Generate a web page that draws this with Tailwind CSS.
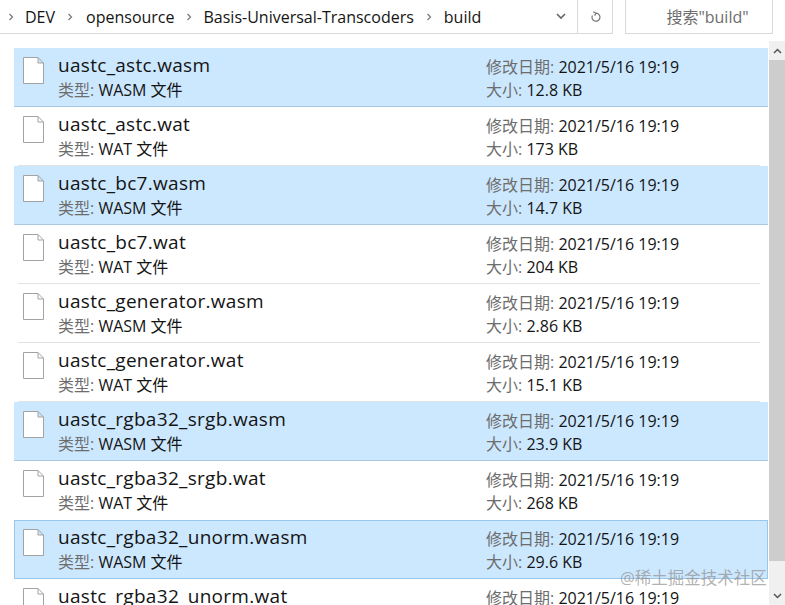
<!DOCTYPE html>
<html lang="zh-CN">
<head>
    <meta charset="UTF-8">
    <script src="https://cdn.jsdelivr.net/npm/@tailwindcss/browser@4"></script>
    <title>build</title>
</head>
<body class="bg-white">
<div class="relative h-[605px] w-[785px] overflow-hidden bg-white font-['Open_Sans','Noto_Sans_CJK_SC',sans-serif] text-[#141414]">
    <!-- address bar -->
    <div class="flex h-[34px] items-stretch">
        <div class="flex w-[613px] items-center border-r border-b border-[#d9d9d9] text-[16px]">
            <svg class="ml-[8px] mr-[11px] h-[8px] w-[6px]" viewBox="0 0 6 8" fill="none" stroke="#777" stroke-width="1.2"><path d="M1.5 1l3 3-3 3"/></svg>
            <span>DEV</span>
            <svg class="ml-[12px] mr-[13px] h-[8px] w-[6px]" viewBox="0 0 6 8" fill="none" stroke="#777" stroke-width="1.2"><path d="M1.5 1l3 3-3 3"/></svg>
            <span>opensource</span>
            <svg class="mx-[11.5px] h-[8px] w-[6px]" viewBox="0 0 6 8" fill="none" stroke="#777" stroke-width="1.2"><path d="M1.5 1l3 3-3 3"/></svg>
            <span>Basis-Universal-Transcoders</span>
            <svg class="mx-[12px] h-[8px] w-[6px]" viewBox="0 0 6 8" fill="none" stroke="#777" stroke-width="1.2"><path d="M1.5 1l3 3-3 3"/></svg>
            <span>build</span>
            <svg class="ml-auto mr-[11px] h-[7px] w-[10px]" viewBox="0 0 10 7" fill="none" stroke="#666" stroke-width="1.6"><path d="M1 1l4 4 4-4"/></svg>
            <div class="flex h-full w-[35px] items-center justify-center border-l border-[#d9d9d9]">
                <svg class="h-[12px] w-[11px]" viewBox="0 0 11 12" fill="none" stroke="#777" stroke-width="1.2"><path d="M6 2.2a4 4 0 1 1-3.6 2.2M3.2 .8L6 2.2 4.6 4.6"/></svg>
            </div>
        </div>
        <div class="ml-[12px] flex w-[148px] items-center justify-center border-x border-b border-[#d9d9d9] pl-[17px] text-[16px] text-[#6d6d6d]">搜索"build"</div>
    </div>

    <div class="flex h-[571px]">
        <!-- file list -->
        <div class="ml-[14px] w-[754px] pt-[14px]">
            <div class="flex h-[59px] items-stretch border-b border-[#a9c9e4] bg-[#cce8ff]">
                <svg class="mt-[9px] ml-[9px] h-[27px] w-[21px] shrink-0" viewBox="0 0 21 27" fill="#fff" stroke="#a3a3a3"><path d="M.5.5h14.500l5.500 5.500v20.500H.5zM15 .5v5.500h5.500"/></svg>
                <div class="ml-[14px] w-[428px] pt-[4px]"><p class="text-[19px] leading-[27px] tracking-[0.3px]">uastc_astc.wasm</p><p class="text-[16px] leading-[22px]"><span class="text-[#6d6d6d]">类型:</span> WASM 文件</p></div>
                <div class="pt-[8px] text-[16px] leading-[23px]"><p><span class="text-[#6d6d6d]">修改日期:</span> 2021/5/16 19:19</p><p><span class="text-[#6d6d6d]">大小:</span> 12.8 KB</p></div>
            </div>
            <div class="flex h-[59px] items-stretch border-b border-[#e3e3e3] mr-[8px] ml-[4px]">
                <svg class="mt-[9px] ml-[5px] h-[27px] w-[21px] shrink-0" viewBox="0 0 21 27" fill="#fff" stroke="#a3a3a3"><path d="M.5.5h14.500l5.500 5.500v20.500H.5zM15 .5v5.500h5.500"/></svg>
                <div class="ml-[14px] w-[428px] pt-[4px]"><p class="text-[19px] leading-[27px] tracking-[0.3px]">uastc_astc.wat</p><p class="text-[16px] leading-[22px]"><span class="text-[#6d6d6d]">类型:</span> WAT 文件</p></div>
                <div class="pt-[8px] text-[16px] leading-[23px]"><p><span class="text-[#6d6d6d]">修改日期:</span> 2021/5/16 19:19</p><p><span class="text-[#6d6d6d]">大小:</span> 173 KB</p></div>
            </div>
            <div class="flex h-[59px] items-stretch border-b border-[#a9c9e4] bg-[#cce8ff]">
                <svg class="mt-[9px] ml-[9px] h-[27px] w-[21px] shrink-0" viewBox="0 0 21 27" fill="#fff" stroke="#a3a3a3"><path d="M.5.5h14.500l5.500 5.500v20.500H.5zM15 .5v5.500h5.500"/></svg>
                <div class="ml-[14px] w-[428px] pt-[4px]"><p class="text-[19px] leading-[27px] tracking-[0.3px]">uastc_bc7.wasm</p><p class="text-[16px] leading-[22px]"><span class="text-[#6d6d6d]">类型:</span> WASM 文件</p></div>
                <div class="pt-[8px] text-[16px] leading-[23px]"><p><span class="text-[#6d6d6d]">修改日期:</span> 2021/5/16 19:19</p><p><span class="text-[#6d6d6d]">大小:</span> 14.7 KB</p></div>
            </div>
            <div class="flex h-[59px] items-stretch border-b border-[#e3e3e3] mr-[8px] ml-[4px]">
                <svg class="mt-[9px] ml-[5px] h-[27px] w-[21px] shrink-0" viewBox="0 0 21 27" fill="#fff" stroke="#a3a3a3"><path d="M.5.5h14.500l5.500 5.500v20.500H.5zM15 .5v5.500h5.500"/></svg>
                <div class="ml-[14px] w-[428px] pt-[4px]"><p class="text-[19px] leading-[27px] tracking-[0.3px]">uastc_bc7.wat</p><p class="text-[16px] leading-[22px]"><span class="text-[#6d6d6d]">类型:</span> WAT 文件</p></div>
                <div class="pt-[8px] text-[16px] leading-[23px]"><p><span class="text-[#6d6d6d]">修改日期:</span> 2021/5/16 19:19</p><p><span class="text-[#6d6d6d]">大小:</span> 204 KB</p></div>
            </div>
            <div class="flex h-[59px] items-stretch border-b border-[#e3e3e3] mr-[8px] ml-[4px]">
                <svg class="mt-[9px] ml-[5px] h-[27px] w-[21px] shrink-0" viewBox="0 0 21 27" fill="#fff" stroke="#a3a3a3"><path d="M.5.5h14.500l5.500 5.500v20.500H.5zM15 .5v5.500h5.500"/></svg>
                <div class="ml-[14px] w-[428px] pt-[4px]"><p class="text-[19px] leading-[27px] tracking-[0.3px]">uastc_generator.wasm</p><p class="text-[16px] leading-[22px]"><span class="text-[#6d6d6d]">类型:</span> WASM 文件</p></div>
                <div class="pt-[8px] text-[16px] leading-[23px]"><p><span class="text-[#6d6d6d]">修改日期:</span> 2021/5/16 19:19</p><p><span class="text-[#6d6d6d]">大小:</span> 2.86 KB</p></div>
            </div>
            <div class="flex h-[59px] items-stretch border-b border-[#e3e3e3] mr-[8px] ml-[4px]">
                <svg class="mt-[9px] ml-[5px] h-[27px] w-[21px] shrink-0" viewBox="0 0 21 27" fill="#fff" stroke="#a3a3a3"><path d="M.5.5h14.500l5.500 5.500v20.500H.5zM15 .5v5.500h5.500"/></svg>
                <div class="ml-[14px] w-[428px] pt-[4px]"><p class="text-[19px] leading-[27px] tracking-[0.3px]">uastc_generator.wat</p><p class="text-[16px] leading-[22px]"><span class="text-[#6d6d6d]">类型:</span> WAT 文件</p></div>
                <div class="pt-[8px] text-[16px] leading-[23px]"><p><span class="text-[#6d6d6d]">修改日期:</span> 2021/5/16 19:19</p><p><span class="text-[#6d6d6d]">大小:</span> 15.1 KB</p></div>
            </div>
            <div class="flex h-[59px] items-stretch border-b border-[#a9c9e4] bg-[#cce8ff]">
                <svg class="mt-[9px] ml-[9px] h-[27px] w-[21px] shrink-0" viewBox="0 0 21 27" fill="#fff" stroke="#a3a3a3"><path d="M.5.5h14.500l5.500 5.500v20.500H.5zM15 .5v5.500h5.500"/></svg>
                <div class="ml-[14px] w-[428px] pt-[4px]"><p class="text-[19px] leading-[27px] tracking-[0.3px]">uastc_rgba32_srgb.wasm</p><p class="text-[16px] leading-[22px]"><span class="text-[#6d6d6d]">类型:</span> WASM 文件</p></div>
                <div class="pt-[8px] text-[16px] leading-[23px]"><p><span class="text-[#6d6d6d]">修改日期:</span> 2021/5/16 19:19</p><p><span class="text-[#6d6d6d]">大小:</span> 23.9 KB</p></div>
            </div>
            <div class="flex h-[59px] items-stretch mr-[8px] ml-[4px]">
                <svg class="mt-[9px] ml-[5px] h-[27px] w-[21px] shrink-0" viewBox="0 0 21 27" fill="#fff" stroke="#a3a3a3"><path d="M.5.5h14.500l5.500 5.500v20.500H.5zM15 .5v5.500h5.500"/></svg>
                <div class="ml-[14px] w-[428px] pt-[4px]"><p class="text-[19px] leading-[27px] tracking-[0.3px]">uastc_rgba32_srgb.wat</p><p class="text-[16px] leading-[22px]"><span class="text-[#6d6d6d]">类型:</span> WAT 文件</p></div>
                <div class="pt-[8px] text-[16px] leading-[23px]"><p><span class="text-[#6d6d6d]">修改日期:</span> 2021/5/16 19:19</p><p><span class="text-[#6d6d6d]">大小:</span> 268 KB</p></div>
            </div>
            <div class="flex h-[59px] items-stretch border border-[#99c7ec] bg-[#cce8ff]">
                <svg class="mt-[8px] ml-[8px] h-[27px] w-[21px] shrink-0" viewBox="0 0 21 27" fill="#fff" stroke="#a3a3a3"><path d="M.5.5h14.500l5.500 5.500v20.500H.5zM15 .5v5.500h5.500"/></svg>
                <div class="ml-[14px] w-[428px] pt-[3px]"><p class="text-[19px] leading-[27px] tracking-[0.3px]">uastc_rgba32_unorm.wasm</p><p class="text-[16px] leading-[22px]"><span class="text-[#6d6d6d]">类型:</span> WASM 文件</p></div>
                <div class="pt-[7px] text-[16px] leading-[23px]"><p><span class="text-[#6d6d6d]">修改日期:</span> 2021/5/16 19:19</p><p><span class="text-[#6d6d6d]">大小:</span> 29.6 KB</p></div>
            </div>
            <div class="flex h-[59px] items-stretch mr-[8px] ml-[4px]">
                <svg class="mt-[9px] ml-[5px] h-[27px] w-[21px] shrink-0" viewBox="0 0 21 27" fill="#fff" stroke="#a3a3a3"><path d="M.5.5h14.500l5.500 5.500v20.500H.5zM15 .5v5.500h5.500"/></svg>
                <div class="ml-[14px] w-[428px] pt-[4px]"><p class="text-[19px] leading-[27px] tracking-[0.3px]">uastc_rgba32_unorm.wat</p></div>
                <div class="pt-[8px] text-[16px] leading-[23px]"><p><span class="text-[#6d6d6d]">修改日期:</span> 2021/5/16 19:19</p></div>
            </div>
        </div>

        <!-- scrollbar -->
        <div class="mt-[7px] ml-[1px] flex h-[564px] w-[16px] flex-col bg-[#f0f0f0]">
            <div class="flex h-[19px] items-center justify-center"><svg class="h-[6px] w-[9px]" viewBox="0 0 9 6" fill="none" stroke="#555" stroke-width="1.5"><path d="M1 5l3.500-3.500L8 5"/></svg></div>
            <div class="h-[501px] bg-[#cdcdcd]"></div>
            <div class="mt-auto flex h-[18px] items-center justify-center"><svg class="h-[6px] w-[9px]" viewBox="0 0 9 6" fill="none" stroke="#555" stroke-width="1.5"><path d="M1 1l3.500 3.500L8 1"/></svg></div>
        </div>
    </div>

    <!-- watermark -->
    <div class="absolute top-[568px] left-[620px] text-[16.500px] leading-[20px] whitespace-nowrap text-[#8f8f8f]/70">@稀土掘金技术社区</div>
</div>
</body>
</html>
